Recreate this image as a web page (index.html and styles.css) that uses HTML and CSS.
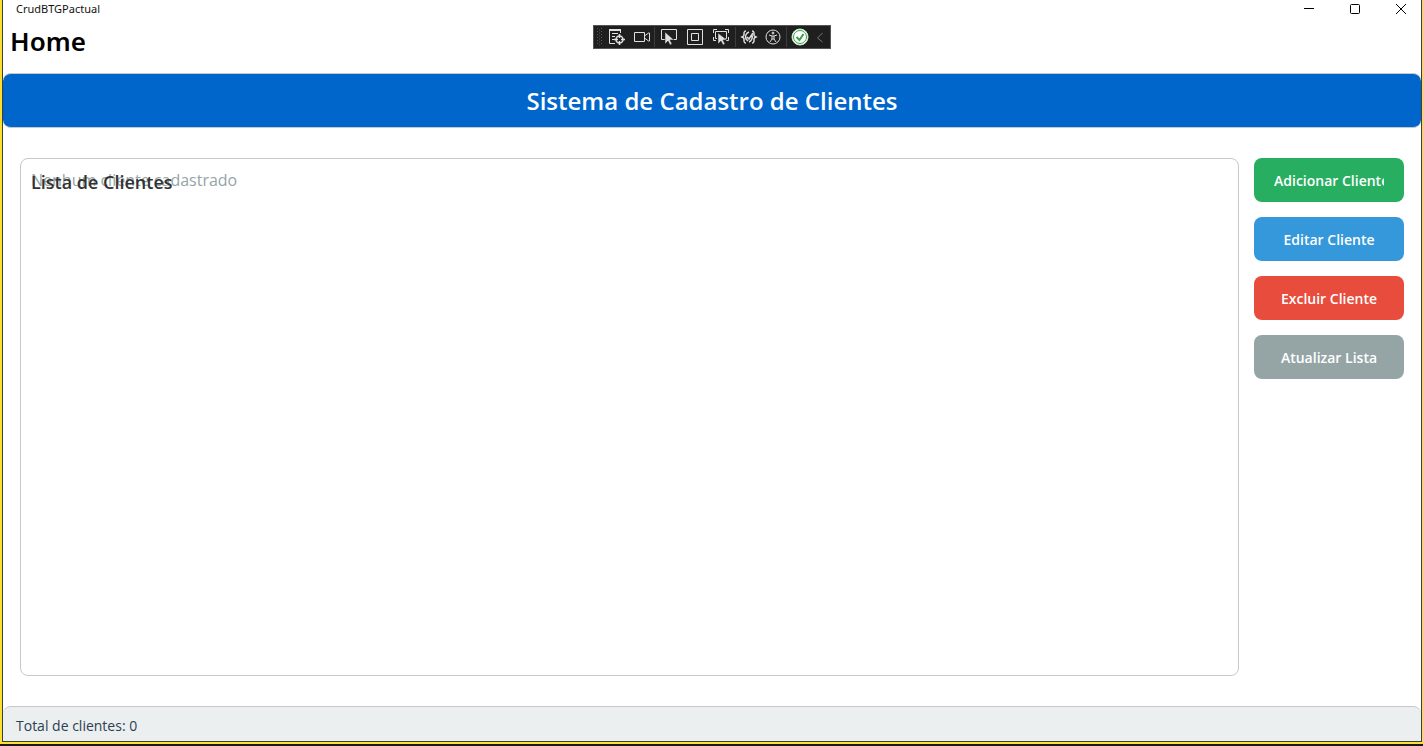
FILE: index.html
```html
<!DOCTYPE html>
<html lang="pt-BR">
<head>
<meta charset="utf-8">
<title>CrudBTGPactual</title>
<link rel="stylesheet" href="styles.css">
</head>
<body>
<div class="window">
  <header class="titlebar">
    <span class="app-name">CrudBTGPactual</span>
    <div class="window-controls">
      <button class="window-button" aria-label="Minimizar"><svg width="12" height="12" viewBox="0 0 12 12"><path d="M1 5.500h10"/></svg></button>
      <button class="window-button" aria-label="Maximizar"><svg width="12" height="12" viewBox="0 0 12 12"><rect x="1.500" y="1.500" width="9" height="9" rx="1"/></svg></button>
      <button class="window-button" aria-label="Fechar"><svg width="12" height="12" viewBox="0 0 12 12"><path d="M1 1l10 10M11 1L1 11"/></svg></button>
    </div>
  </header>
  <h1 class="page-title">Home</h1>

  <div class="debug-bar" role="toolbar" aria-label="Depuração">
    <svg class="grip" width="7" height="18" viewBox="0 0 7 18"><path d="M1.500 0v18M5.500 0v18" stroke-dasharray="1 2"/><path d="M3.500 1.500v16" stroke-dasharray="1 2"/></svg>
    <div class="tool-group">
      <button class="tool" aria-label="Árvore visual"><svg width="18" height="18" viewBox="0 0 18 18"><path d="M12.500 5V1.500h-11v14H7"/><path d="M1 2h12" stroke-width="2"/><path d="M4 5.500h6M4 8.500h3M4 11.500h2"/><circle cx="11.500" cy="11.500" r="3.500" stroke-width="1.500"/><path d="M11.500 6v4M11.500 13v4M6 11.500h4M13 11.500h4" stroke-width="1.500"/></svg></button>
      <button class="tool" aria-label="Gravar"><svg width="18" height="18" viewBox="0 0 18 18"><path d="M1.500 4.500h10v9h-10zM11.500 8l4-3h1v8h-1l-4-3"/></svg></button>
    </div>
    <span class="divider"></span>
    <div class="tool-group tool-group-wide">
      <button class="tool" aria-label="Selecionar elemento"><svg width="18" height="18" viewBox="0 0 18 18"><path d="M5 11.500H1.500v-10h15v10H12"/><path class="solid" d="M5 4v12l3-3 2 4 2-1-2-4h4z"/></svg></button>
      <button class="tool" aria-label="Exibir layout"><svg width="18" height="18" viewBox="0 0 18 18"><path d="M1.500 1.500h15v15h-15zM5.500 5.500h7v7h-7z"/></svg></button>
      <button class="tool" aria-label="Acompanhar foco"><svg width="18" height="18" viewBox="0 0 18 18"><path d="M1.500 5V1.500H5M13 1.500h3.500V5M1.500 9v3.500H4M14 12.500h2.500V9M5 10.500H3.500v-7h11v7H13"/><path class="solid" d="M6 5v11l3-3 2 4 2-1-2-4h4z"/></svg></button>
    </div>
    <span class="divider"></span>
    <div class="tool-group">
      <button class="tool" aria-label="Falhas de associação"><svg width="18" height="18" viewBox="0 0 18 18"><path stroke-width="1.500" d="M6 3C4 3 4 4 4 6S4 8 2 9c2 1 2 1 2 3s0 3 2 3M12 3c2 0 2 1 2 3s0 2 2 3c-2 1-2 1-2 3s0 3-2 3"/><path d="M9 4C6 5 5 8 6 11l2 2M12 7c1 4-1 6-3 7M7 9l2 2 4-6" stroke-width="1.500"/></svg></button>
      <button class="tool" aria-label="Acessibilidade"><svg width="18" height="18" viewBox="0 0 18 18"><circle cx="8" cy="9" r="7"/><circle class="solid" cx="8" cy="5" r="1.500"/><path d="M4 7l3 1v3l-2 3M12 7l-3 1v3l2 3M7 8h2M7 11h2"/></svg></button>
    </div>
    <span class="divider"></span>
    <button class="tool" aria-label="Recarga dinâmica"><svg width="18" height="18" viewBox="0 0 18 18"><circle cx="9" cy="9" r="8" fill="#fff" stroke="#c9ebcc"/><circle cx="9" cy="9" r="6.500" stroke="#379f43"/><path d="M5.500 9l3 3 4-6" stroke="#379f43" stroke-width="2"/></svg></button>
    <button class="tool tool-collapse" aria-label="Recolher"><svg width="8" height="12" viewBox="0 0 8 12"><path d="M6.500 2l-5 5 5 4"/></svg></button>
  </div>

  <div class="banner"><h2 class="banner-title">Sistema de Cadastro de Clientes</h2></div>

  <main class="content">
    <section class="client-list">
      <p class="empty-text">Nenhum cliente cadastrado</p>
      <h3 class="list-title">Lista de Clientes</h3>
    </section>
    <div class="actions">
      <button class="action add"><span class="action-label">Adicionar Cliente</span></button>
      <button class="action edit"><span class="action-label">Editar Cliente</span></button>
      <button class="action delete"><span class="action-label">Excluir Cliente</span></button>
      <button class="action refresh"><span class="action-label">Atualizar Lista</span></button>
    </div>
  </main>

  <footer class="status">Total de clientes: 0</footer>
</div>
</body>
</html>
```
FILE: styles.css
```css
* {
  box-sizing: border-box;
}

body {
  margin: 0;
  height: 100vh;
  border-bottom: 2px solid #1c1718;
  background: #fde02f;
  font-family: "Open Sans", "Noto Sans", sans-serif;
}

button {
  margin: 0;
  padding: 0;
  border: 0;
  background: none;
  font-family: inherit;
}

h1, h2, h3, p {
  margin: 0;
}

svg {
  display: block;
  fill: none;
  stroke: currentColor;
}

.window {
  position: relative;
  display: flex;
  flex-direction: column;
  height: calc(100% - 2px);
  margin: 0 1px 0 2px;
  border: 1px solid #38403c;
  border-top: 0;
  background: #fff;
}

.titlebar {
  display: flex;
  justify-content: space-between;
  height: 18px;
  padding-left: 13px;
}

.app-name {
  font-family: "Noto Sans", sans-serif;
  font-size: 11px;
  line-height: 18px;
  color: #111;
}

.window-controls {
  display: flex;
}

.window-button {
  display: grid;
  place-items: center;
  width: 46px;
  color: #000;
}

.window-button:last-child {
  width: 43px;
  padding-left: 3px;
}

.page-title {
  height: 55px;
  padding-left: 7px;
  font-family: "Noto Sans", sans-serif;
  font-size: 26px;
  font-weight: 600;
  line-height: 46px;
  color: #000;
}

.debug-bar {
  position: absolute;
  top: 25px;
  left: 50%;
  transform: translateX(-50%);
  display: flex;
  align-items: center;
  width: 238px;
  height: 24px;
  padding: 0 2px;
  border: 1px solid #555;
  background: #1f1f1f;
  color: #e0e0e0;
}

.grip {
  margin-right: 1px;
  color: #5a5a5a;
}

.tool-group {
  display: flex;
}

.tool-group-wide {
  padding: 0 1px;
}

.tool {
  display: grid;
  width: 25px;
  padding-left: 4px;
  place-items: center start;
  color: inherit;
}

.tool-group-wide .tool {
  width: 26px;
}

.tool-collapse {
  width: 16px;
  color: #777;
}

.solid {
  fill: currentColor;
  stroke: #1f1f1f;
  stroke-width: 0.5;
}

.divider {
  width: 1px;
  height: 20px;
  background: #3d3d3d;
}

.banner {
  padding: 10px;
  border: 1px solid #c8c8c8;
  border-width: 1px 0;
  border-radius: 8px;
  background: #0066cc;
}

.banner-title {
  font-size: 24px;
  font-weight: 600;
  line-height: 33px;
  text-align: center;
  color: #fff;
}

.content {
  display: flex;
  flex: 1;
  gap: 15px;
  padding: 30px 17px;
}

.client-list {
  display: grid;
  flex: 1;
  align-items: start;
  padding: 10px;
  border: 1px solid #c8c8c8;
  border-radius: 8px;
}

.empty-text,
.list-title {
  grid-area: 1 / 1;
}

.empty-text {
  font-size: 16px;
  line-height: 22px;
  color: #95a5a6;
}

.list-title {
  font-size: 18px;
  font-weight: 600;
  line-height: 26px;
  color: #333;
}

.actions {
  display: flex;
  flex-direction: column;
  gap: 15px;
  width: 150px;
}

.action {
  height: 44px;
  padding: 2px 20px 0;
  border-radius: 8px;
  font-size: 14px;
  font-weight: 600;
  line-height: 20px;
  color: #fff;
}

.action-label {
  display: block;
  overflow: hidden;
  white-space: nowrap;
}

.add {
  background: #27ae60;
}

.edit {
  background: #3498db;
}

.delete {
  background: #e74c3c;
}

.refresh {
  background: #95a5a6;
}

.status {
  padding: 9px 13px 5px;
  border-top: 1px solid #c8c8c8;
  border-radius: 8px 8px 0 0;
  background: #ebeff0;
  font-size: 14px;
  line-height: 20px;
  color: #2c3e50;
}
```
